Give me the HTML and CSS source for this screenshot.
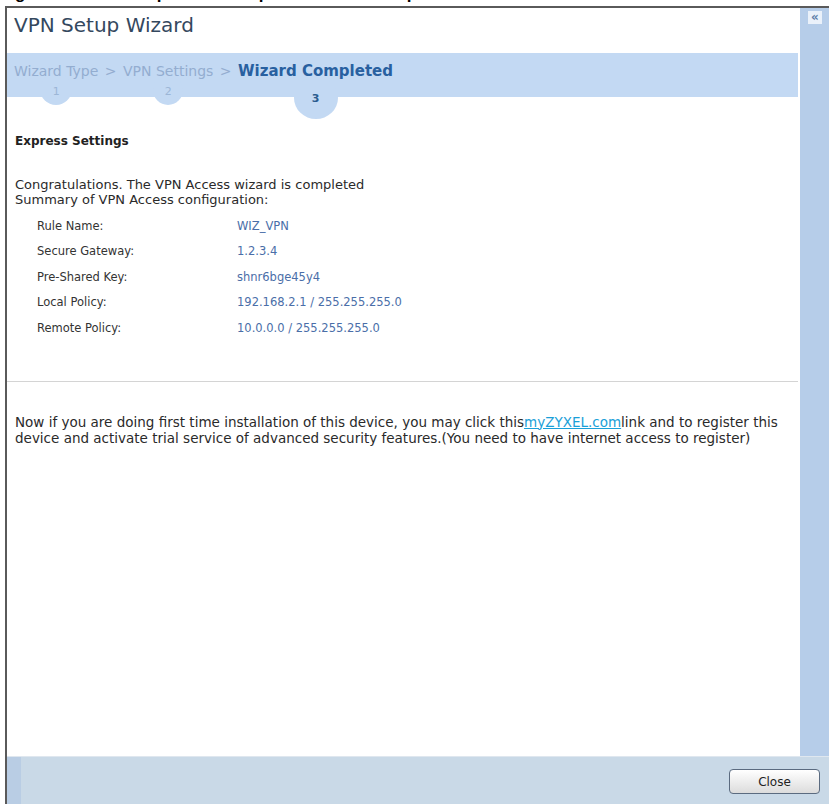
FILE: index.html
```html
<!DOCTYPE html>
<html>
<head>
<meta charset="utf-8">
<link rel="stylesheet" href="styles.css">
</head>
<body>
<div class="caption"><span>Figure 45 VPN Setup Wizard: Express Wizard Completed</span></div>
<div class="window">
  <div class="main">
    <div class="title">VPN Setup Wizard</div>
    <div class="band">
      <span class="step"><span class="label">Wizard Type</span><span class="bump b1">1</span></span>
      <span class="sep">&gt;</span>
      <span class="step"><span class="label">VPN Settings</span><span class="bump b2">2</span></span>
      <span class="sep">&gt;</span>
      <span class="step current"><span class="label">Wizard Completed</span><span class="bump b3">3</span></span>
    </div>
    <div class="content">
      <div class="heading">Express Settings</div>
      <div class="intro">Congratulations. The VPN Access wizard is completed<br>Summary of VPN Access configuration:</div>
      <div class="rows">
        <div class="row"><span class="key">Rule Name:</span><span class="val">WIZ_VPN</span></div>
        <div class="row"><span class="key">Secure Gateway:</span><span class="val">1.2.3.4</span></div>
        <div class="row"><span class="key">Pre-Shared Key:</span><span class="val">shnr6bge45y4</span></div>
        <div class="row"><span class="key">Local Policy:</span><span class="val">192.168.2.1 / 255.255.255.0</span></div>
        <div class="row"><span class="key">Remote Policy:</span><span class="val">10.0.0.0 / 255.255.255.0</span></div>
      </div>
      <div class="divider"></div>
      <p class="note">Now if you are doing first time installation of this device, you may click this<a class="link">myZYXEL.com</a>link and to register this device and activate trial service of advanced security features.(You need to have internet access to register)</p>
    </div>
  </div>
  <div class="side"><span class="collapse">&laquo;</span></div>
  <div class="footer">
    <div class="stripe"></div>
    <button class="close">Close</button>
  </div>
</div>
</body>
</html>
```
FILE: styles.css
```css
html, body {
  margin: 0;
  padding: 0;
  background: #ffffff;
}
body {
  width: 829px;
  height: 804px;
  overflow: hidden;
  font-family: "DejaVu Sans", Verdana, sans-serif;
}
.caption {
  height: 6px;
  overflow: hidden;
}
.caption span {
  display: block;
  margin-top: -16px;
  font-family: "Liberation Sans", Arial, sans-serif;
  font-weight: bold;
  font-size: 17px;
  line-height: 19px;
  color: #000;
  white-space: nowrap;
}
.window {
  margin-left: 5px;
  height: 798px;
  border-left: 2px solid #5a5a5a;
  border-top: 2px solid #5a5a5a;
  box-sizing: border-box;
  display: grid;
  grid-template-columns: 1fr 29px;
  grid-template-rows: 748px 48px;
}
.main {
  padding-right: 2px;
  overflow: hidden;
}
.title {
  height: 45px;
  box-sizing: border-box;
  padding: 3px 0 0 7px;
  font-size: 20px;
  line-height: 28px;
  color: #34485e;
}
.band {
  height: 44px;
  box-sizing: border-box;
  background: #c3d9f3;
  padding: 10px 0 0 7px;
  font-size: 14px;
  line-height: 17px;
  color: #93add0;
  white-space: nowrap;
}
.sep {
  margin: 0 2px;
}
.step {
  position: relative;
  display: inline-block;
}
.label {
  position: relative;
  z-index: 1;
}
.step.current .label {
  font-weight: bold;
  font-size: 15px;
  color: #2860a0;
}
.bump {
  position: absolute;
  left: 50%;
  z-index: 0;
  display: flex;
  justify-content: center;
  box-sizing: border-box;
  background: #c3d9f3;
  border-radius: 50%;
  font-size: 11px;
  line-height: 12px;
  color: #9cb6d6;
}
.b1 {
  width: 32px;
  height: 32px;
  margin-left: -16px;
  top: 10px;
  padding-top: 13px;
}
.b2 {
  width: 30px;
  height: 30px;
  margin-left: -15px;
  top: 12px;
  padding-top: 11px;
}
.b3 {
  width: 44px;
  height: 42px;
  margin-left: -22px;
  top: 14px;
  padding-top: 16px;
  font-weight: bold;
  color: #2a5c8e;
}
.content {
  padding: 36px 0 0 8px;
  color: #222;
}
.heading {
  font-weight: bold;
  font-size: 12px;
  line-height: 16px;
  color: #222;
}
.intro {
  margin-top: 28px;
  font-size: 13px;
  line-height: 15px;
  color: #2a2a2a;
}
.rows {
  margin-top: 6px;
  padding-left: 22px;
}
.row {
  display: flex;
  height: 25.5px;
  align-items: center;
  font-size: 11.5px;
}
.key {
  width: 200px;
  color: #333;
}
.val {
  color: #4a6ea8;
}
.divider {
  margin: 40px 0 0 -8px;
  border-top: 1px solid #d4d4d4;
}
.note {
  margin: 32px 0 0 0;
  font-size: 13.5px;
  line-height: 16px;
  color: #2a2a2a;
}
.link {
  color: #1aa0d8;
  text-decoration: underline;
}
.side {
  background: #b6cde9;
  padding: 3px 0 0 8px;
}
.collapse {
  display: block;
  width: 14px;
  height: 13px;
  background: #eaf1fa;
  color: #5d7ea8;
  font-size: 12px;
  line-height: 12px;
  text-align: center;
  font-weight: bold;
}
.footer {
  grid-column: 1 / 3;
  background: #c9d9e7;
  border-top: 1px solid #dfe7ef;
  display: flex;
  align-items: center;
  justify-content: space-between;
  padding-right: 9px;
}
.stripe {
  align-self: stretch;
  width: 14px;
  background: #b9cde4;
}
.close {
  width: 91px;
  height: 25px;
  border: 1px solid #5b6b80;
  border-radius: 4px;
  background: linear-gradient(#ffffff, #dcdcdc);
  font-family: "DejaVu Sans", Verdana, sans-serif;
  font-size: 12px;
  color: #222;
  padding: 0;
  margin-top: 2px;
}
```
